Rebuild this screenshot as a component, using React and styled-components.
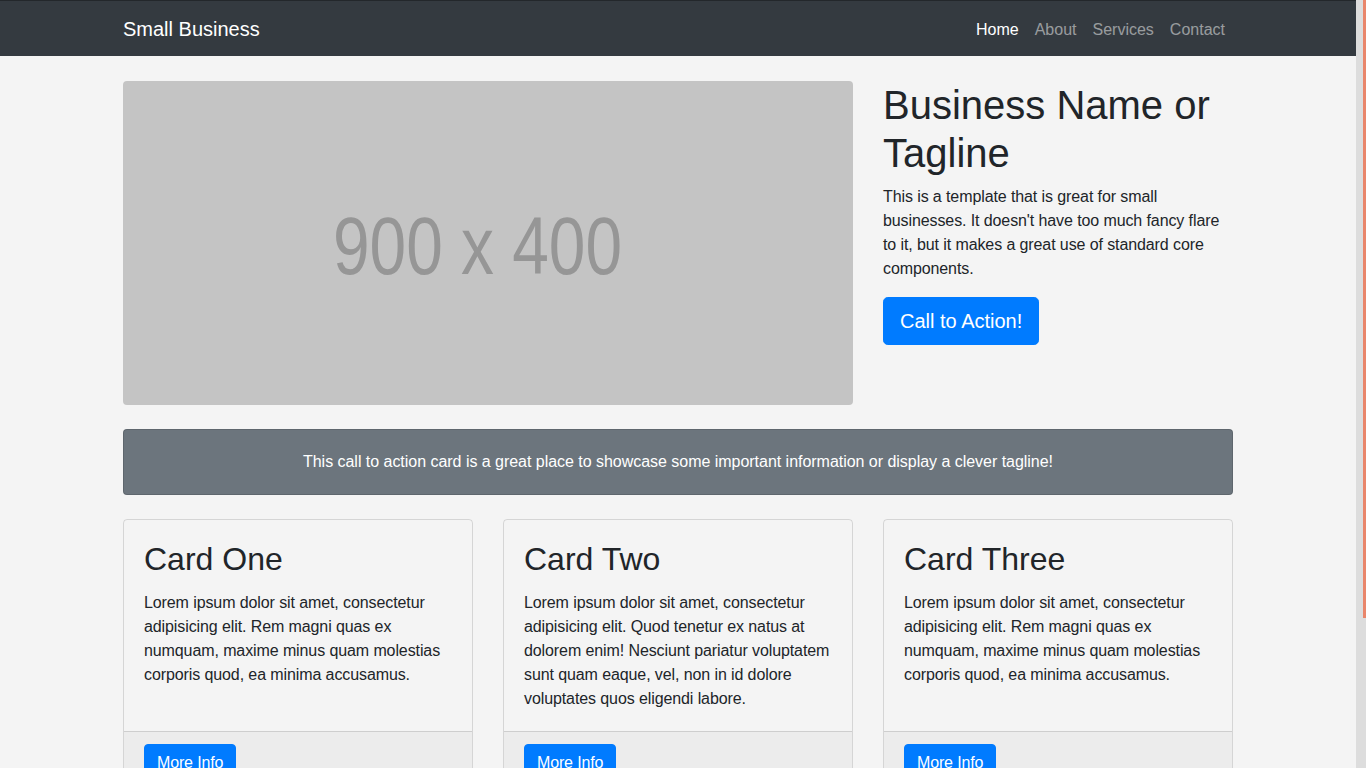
import React from 'react';
import styled, { createGlobalStyle } from 'styled-components';

const GlobalStyle = createGlobalStyle`
  body {
    margin: 0;
    background: #f4f4f4;
    color: #212529;
    font-family: "Liberation Sans", Arial, sans-serif;
    font-size: 16px;
    line-height: 1.5;
    overflow: hidden;
  }
  * {
    box-sizing: border-box;
  }
`;

// window frame: scrolling page + the browser's scrollbar on the right
const Shell = styled.div`
  display: flex;
  height: 100vh;
`;

const Viewport = styled.div`
  flex: 1;
  min-width: 0;
  overflow-y: auto;
  scrollbar-width: none;
  &::-webkit-scrollbar {
    display: none;
  }
`;

const ScrollTrack = styled.div`
  width: 10px;
  flex-shrink: 0;
  background: #dddddd;
  display: flex;
  justify-content: flex-end;
  align-items: flex-start;
`;

const ScrollThumb = styled.div`
  width: 3px;
  height: 618px;
  background: #e9866b;
`;

const Navbar = styled.nav`
  height: 56px;
  background: #343a40;
  border-top: 1px solid #23272b;
`;

const Container = styled.div`
  max-width: 1140px;
  margin: 0 auto;
  padding: 0 15px;
`;

const NavInner = styled(Container)`
  height: 55px;
  display: flex;
  align-items: center;
  justify-content: space-between;
`;

const Brand = styled.a`
  color: #fff;
  font-size: 20px;
  line-height: 30px;
  text-decoration: none;
`;

const NavList = styled.ul`
  display: flex;
  list-style: none;
  margin: 2px 0 0;
  padding: 0;
`;

const NavLink = styled.a`
  display: block;
  padding: 8px;
  color: ${p => (p.$active ? '#fff' : 'rgba(255,255,255,.5)')};
  text-decoration: none;
`;

const Hero = styled.div`
  display: grid;
  grid-template-columns: 730px 350px;
  gap: 30px;
  align-items: start;
  margin: 25px 0 24px;
`;

const Placeholder = styled.svg`
  display: block;
  width: 730px;
  height: 324px;
  border-radius: 4px;
`;

const Intro = styled.div`
  letter-spacing: -0.1px;
`;

const Title = styled.h1`
  font-size: 40px;
  font-weight: 300;
  line-height: 1.2;
  margin: 0 0 8px;
  letter-spacing: 0;
`;

const Lead = styled.p`
  margin: 0 0 16px;
`;

const Button = styled.a`
  display: inline-block;
  background: #007bff;
  color: #fff;
  border: 1px solid #007bff;
  border-radius: ${p => (p.$large ? '4.8px' : '4px')};
  padding: ${p => (p.$large ? '8px 16px' : '6px 12px')};
  font-size: ${p => (p.$large ? '20px' : '16px')};
  line-height: 1.5;
  letter-spacing: ${p => (p.$large ? '0' : '-0.15px')};
  text-decoration: none;
`;

const CtaCard = styled.div`
  background: #6c757d;
  color: #fff;
  border: 1px solid rgba(0,0,0,.125);
  border-radius: 4px;
  padding: 20px;
  text-align: center;
  letter-spacing: -0.03px;
  margin: 24px 0;
`;

const CardRow = styled.div`
  display: grid;
  grid-template-columns: repeat(3, 1fr);
  gap: 30px;
  margin-bottom: 48px;
`;

const Card = styled.div`
  display: flex;
  flex-direction: column;
  border: 1px solid rgba(0,0,0,.125);
  border-radius: 4px;
`;

const CardBody = styled.div`
  flex: 1;
  padding: 20px;
`;

const CardTitle = styled.h2`
  font-size: 32px;
  font-weight: normal;
  line-height: 1.2;
  margin: 0 0 13px;
`;

const CardText = styled.p`
  margin: 0;
  letter-spacing: -0.1px;
`;

const CardFooter = styled.div`
  padding: 12px 20px;
  background: rgba(0,0,0,.03);
  border-top: 1px solid rgba(0,0,0,.125);
`;

const Footer = styled.footer`
  background: #343a40;
  padding: 48px 0;
`;

const Copyright = styled.p`
  margin: 0;
  color: #fff;
  text-align: center;
  font-size: 80%;
`;

const cards = [
  {
    title: 'Card One',
    text: 'Lorem ipsum dolor sit amet, consectetur adipisicing elit. Rem magni quas ex numquam, maxime minus quam molestias corporis quod, ea minima accusamus.',
  },
  {
    title: 'Card Two',
    text: 'Lorem ipsum dolor sit amet, consectetur adipisicing elit. Quod tenetur ex natus at dolorem enim! Nesciunt pariatur voluptatem sunt quam eaque, vel, non in id dolore voluptates quos eligendi labore.',
  },
  {
    title: 'Card Three',
    text: 'Lorem ipsum dolor sit amet, consectetur adipisicing elit. Rem magni quas ex numquam, maxime minus quam molestias corporis quod, ea minima accusamus.',
  },
];

export default function App() {
  return (
    <Shell>
      <GlobalStyle />
      <Viewport>
        <Navbar>
          <NavInner>
            <Brand href="#">Small Business</Brand>
            <NavList>
              <li><NavLink href="#" $active>Home</NavLink></li>
              <li><NavLink href="#">About</NavLink></li>
              <li><NavLink href="#">Services</NavLink></li>
              <li><NavLink href="#">Contact</NavLink></li>
            </NavList>
          </NavInner>
        </Navbar>

        <Container>
          <Hero>
            <Placeholder viewBox="0 0 730 324">
              <rect width="730" height="324" fill="#c4c4c4" />
              <text
                x="210"
                y="193"
                fill="#969696"
                fontFamily="Liberation Sans, Arial, sans-serif"
                fontSize="82"
                textLength="289"
                lengthAdjust="spacingAndGlyphs"
              >
                900 x 400
              </text>
            </Placeholder>
            <Intro>
              <Title>Business Name or Tagline</Title>
              <Lead>
                This is a template that is great for small businesses. It doesn't have too much fancy flare to it, but it makes a great use of standard core components.
              </Lead>
              <Button href="#" $large>Call to Action!</Button>
            </Intro>
          </Hero>

          <CtaCard>
            This call to action card is a great place to showcase some important information or display a clever tagline!
          </CtaCard>

          <CardRow>
            {cards.map(c => (
              <Card key={c.title}>
                <CardBody>
                  <CardTitle>{c.title}</CardTitle>
                  <CardText>{c.text}</CardText>
                </CardBody>
                <CardFooter>
                  <Button href="#">More Info</Button>
                </CardFooter>
              </Card>
            ))}
          </CardRow>
        </Container>

        <Footer>
          <Container>
            <Copyright>Copyright &copy; Your Website 2019</Copyright>
          </Container>
        </Footer>
      </Viewport>
      <ScrollTrack>
        <ScrollThumb />
      </ScrollTrack>
    </Shell>
  );
}
